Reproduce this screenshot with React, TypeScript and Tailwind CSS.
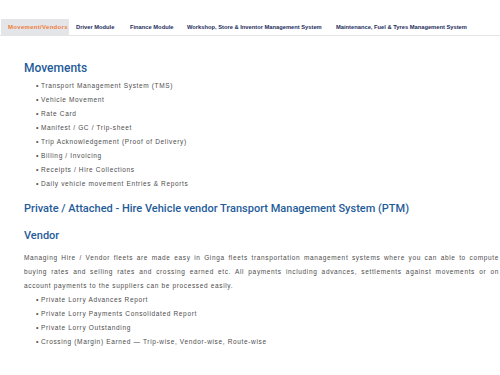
import React from 'react';

const tabs = [
  { label: 'Movement/Vendors', w: 'w-[68px]', active: true },
  { label: 'Driver Module', w: 'w-[54px]' },
  { label: 'Finance Module', w: 'w-[57px]' },
  { label: 'Workshop, Store & Inventor Management System', w: 'w-[149px]' },
  { label: 'Maintenance, Fuel & Tyres Management System', w: 'w-[145px]' },
];

const movements = [
  'Transport Management System (TMS)',
  'Vehicle Movement',
  'Rate Card',
  'Manifest / GC / Trip-sheet',
  'Trip Acknowledgement (Proof of Delivery)',
  'Billing / Invoicing',
  'Receipts / Hire Collections',
  'Daily vehicle movement Entries & Reports',
];

const vendorItems = [
  'Private Lorry Advances Report',
  'Private Lorry Payments Consolidated Report',
  'Private Lorry Outstanding',
  'Crossing (Margin) Earned — Trip-wise, Vendor-wise, Route-wise',
];

function BulletList({ items }: { items: string[] }) {
  return (
    <ul className="pl-[36px]">
      {items.map((item) => (
        <li key={item} className="flex items-center h-[14px] text-[6.5px] tracking-[0.65px] text-[#4d4d4d] whitespace-nowrap">
          <span className="w-[5px] text-[7px]">•</span>
          {item}
        </li>
      ))}
    </ul>
  );
}

export default function App() {
  return (
    <div className="w-[500px] h-[375px] bg-white overflow-hidden font-['Liberation_Sans',sans-serif]">
      <div className="pt-[19px]">
        <div className="flex border-b border-[#e5e5e5] pl-px">
          {tabs.map((tab) => (
            <div
              key={tab.label}
              className={
                tab.active
                  ? `${tab.w} h-[16px] pl-[7px] flex items-center bg-[#e3e5e8] text-[#f07d3c] text-[6px] tracking-[0.3px] font-bold whitespace-nowrap`
                  : `${tab.w} h-[16px] pl-[7px] flex items-center text-[#1d2d5c] text-[5.75px] font-bold whitespace-nowrap`
              }
            >
              {tab.label}
            </div>
          ))}
        </div>
      </div>

      <div className="pl-[24px] font-['Roboto',sans-serif] font-medium text-[#1f5c99]">
        <h2 className="mt-[24px] text-[12px] leading-[16px]">Movements</h2>
      </div>
      <div className="mt-[3px]">
        <BulletList items={movements} />
      </div>

      <div className="pl-[24px]">
        <h2 className="mt-[10px] text-[11px] leading-[16px] text-[#1f5c99] font-['Roboto',sans-serif] font-medium">
          Private / Attached - Hire Vehicle vendor Transport Management System (PTM)
        </h2>
        <h3 className="mt-[11px] text-[11px] leading-[16px] text-[#1f5c99] font-['Roboto',sans-serif] font-medium">Vendor</h3>
        <p className="mt-[7px] w-[475px] text-justify text-[6.5px] leading-[14px] tracking-[0.65px] text-[#4d4d4d]">
          Managing Hire / Vendor fleets are made easy in Ginga fleets transportation management systems where you can able to compute
          buying rates and selling rates and crossing earned etc. All payments including advances, settlements against movements or on
          account payments to the suppliers can be processed easily.
        </p>
      </div>
      <BulletList items={vendorItems} />
    </div>
  );
}
